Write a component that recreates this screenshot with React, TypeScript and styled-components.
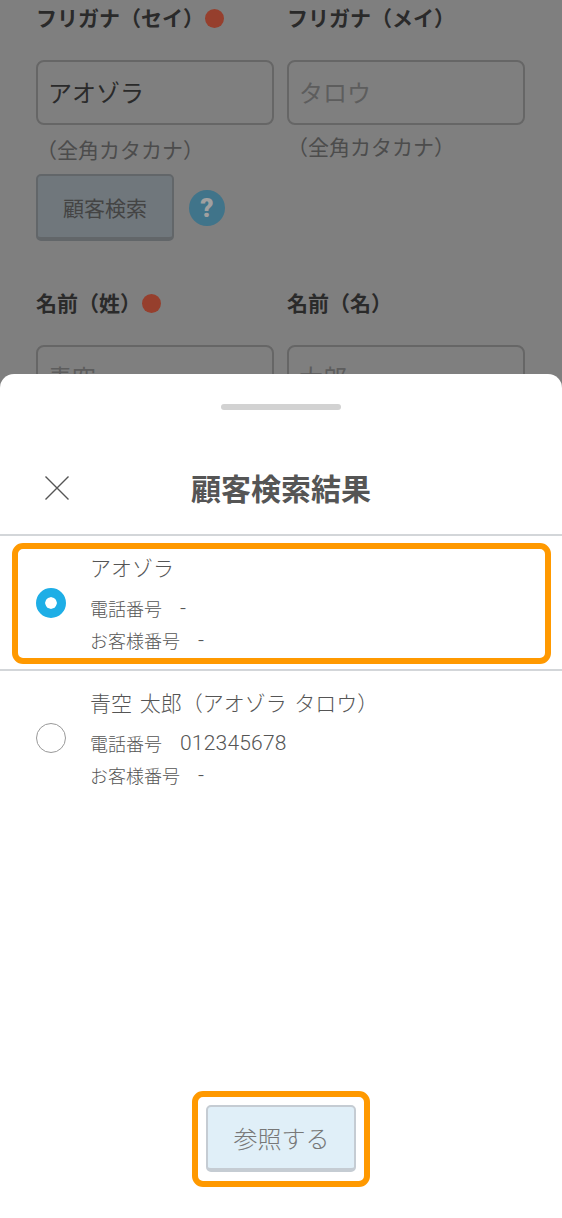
import React from 'react';
import styled, { createGlobalStyle } from 'styled-components';

const GlobalStyle = createGlobalStyle`
  html, body {
    margin: 0;
    padding: 0;
    background: #fff;
    font-family: 'Noto Sans CJK JP', 'Noto Sans', sans-serif;
  }
`;

const Page = styled.div`
  position: relative;
  width: 562px;
  height: 1218px;
  overflow: hidden;
  background: #fff;
`;

const Form = styled.div`
  display: grid;
  grid-template-columns: 238px 238px;
  column-gap: 13px;
  padding: 3px 37px 0 36px;
  align-items: start;
`;

const Field = styled.div`
  display: flex;
  flex-direction: column;
`;

const Label = styled.div`
  box-sizing: border-box;
  display: flex;
  align-items: center;
  gap: 1px;
  height: 30px;
  padding-bottom: 2px;
  margin-bottom: 27px;
  font-size: 21px;
  font-weight: 700;
  color: #555;
`;

const Required = styled.span`
  position: relative;
  top: 1px;
  z-index: 1;
  width: 19px;
  height: 19px;
  border-radius: 50%;
  background: #963f2d;
`;

const Input = styled.div<{ $placeholder?: boolean }>`
  box-sizing: border-box;
  height: 65px;
  padding: 0 10px 2px;
  display: flex;
  align-items: center;
  border: 2px solid #ccc;
  border-radius: 8px;
  background: #fff;
  font-size: 24px;
  color: ${(p) => (p.$placeholder ? '#bbb' : '#555')};
`;

const Hint = styled.div<{ $top: number }>`
  margin-top: ${(p) => p.$top}px;
  font-size: 21px;
  line-height: 30px;
  color: #999;
`;

const SearchRow = styled.div`
  grid-column: 1 / 3;
  display: flex;
  align-items: center;
  gap: 15px;
  margin-top: 10px;
  margin-bottom: 47px;
`;

const SearchButton = styled.div`
  box-sizing: border-box;
  width: 138px;
  height: 67px;
  display: flex;
  align-items: center;
  justify-content: center;
  background: #e0eff8;
  border: 2px solid #c5ccd3;
  border-bottom-width: 4px;
  border-radius: 5px;
  font-size: 21px;
  color: #888;
`;

const Help = styled.div`
  position: relative;
  z-index: 1;
  width: 36px;
  height: 36px;
  border-radius: 50%;
  background: #40748a;
  color: #a0a0a0;
  display: flex;
  align-items: center;
  justify-content: center;
  font-size: 26px;
  font-weight: 900;
  font-family: 'Roboto', sans-serif;
`;

const Overlay = styled.div`
  position: absolute;
  inset: 0;
  background: rgba(0, 0, 0, 0.5);
`;

const Sheet = styled.div`
  position: absolute;
  z-index: 2;
  left: 0;
  right: 0;
  top: 374px;
  bottom: 0;
  background: #fff;
  border-radius: 14px 14px 0 0;
  display: flex;
  flex-direction: column;
`;

const Handle = styled.div`
  width: 120px;
  height: 6px;
  margin: 30px auto 0;
  border-radius: 3px;
  background: #d2d2d2;
`;

const Header = styled.div`
  position: relative;
  height: 126px;
  display: flex;
  align-items: center;
  justify-content: center;
  border-bottom: 2px solid #d3d6d9;
  box-sizing: border-box;
  padding-top: 30px;
  font-size: 30px;
  font-weight: 700;
  color: #555;
`;

const Close = styled.svg`
  position: absolute;
  left: 45px;
  top: 66px;
  width: 24px;
  height: 24px;
`;

const Result = styled.div<{ $divider?: boolean }>`
  box-sizing: border-box;
  height: 135px;
  display: flex;
  align-items: flex-start;
  padding-left: 36px;
  gap: 24px;
  ${(p) => (p.$divider ? 'border-bottom: 2px solid #d3d6d9;' : '')}
`;

const Radio = styled.div<{ $checked?: boolean }>`
  box-sizing: border-box;
  flex: none;
  width: 30px;
  height: 30px;
  margin-top: 52px;
  border-radius: 50%;
  ${(p) =>
    p.$checked
      ? 'background: #1eaee6; border: 9px solid #1eaee6; box-shadow: inset 0 0 0 6px #fff;'
      : 'border: 1.5px solid #999; background: #fff;'}
`;

const ResultText = styled.div`
  display: flex;
  flex-direction: column;
  padding-top: 16px;
  color: #555;
`;

const Name = styled.div`
  font-size: 21px;
  line-height: 30px;
  margin-bottom: 10px;
  font-weight: 300;
  word-spacing: 3px;
`;

const Meta = styled.div`
  display: flex;
  font-size: 18px;
  line-height: 32px;
  font-weight: 300;
`;

const MetaValue = styled.span`
  margin-left: 18px;
  font-family: 'Roboto', sans-serif;
  font-size: 21px;
  font-weight: 300;
  letter-spacing: 0.2px;
`;

const Footer = styled.div`
  margin-top: auto;
  display: flex;
  justify-content: center;
  padding-bottom: 46px;
`;

const SubmitButton = styled.div`
  box-sizing: border-box;
  width: 150px;
  height: 67px;
  padding-left: 1px;
  display: flex;
  align-items: center;
  justify-content: center;
  background: #e0eff8;
  border: 2px solid #c5ccd3;
  border-bottom-width: 4px;
  border-radius: 5px;
  font-size: 24px;
  font-weight: 300;
  color: #777;
`;

const Highlight = styled.div<{ $left: number; $top: number; $w: number; $h: number }>`
  position: absolute;
  z-index: 3;
  box-sizing: border-box;
  left: ${(p) => p.$left}px;
  top: ${(p) => p.$top}px;
  width: ${(p) => p.$w}px;
  height: ${(p) => p.$h}px;
  border: 6px solid #ff9900;
  border-radius: 11px;
  pointer-events: none;
`;

const App: React.FC = () => {
  return (
    <Page>
      <GlobalStyle />
      <Form>
        <Field>
          <Label>
            フリガナ（セイ）<Required />
          </Label>
          <Input>アオゾラ</Input>
          <Hint $top={9}>（全角カタカナ）</Hint>
        </Field>
        <Field>
          <Label>フリガナ（メイ）</Label>
          <Input $placeholder>タロウ</Input>
          <Hint $top={6}>（全角カタカナ）</Hint>
        </Field>
        <SearchRow>
          <SearchButton>顧客検索</SearchButton>
          <Help>?</Help>
        </SearchRow>
        <Field>
          <Label>
            名前（姓）<Required />
          </Label>
          <Input $placeholder>青空</Input>
        </Field>
        <Field>
          <Label>名前（名）</Label>
          <Input $placeholder>太郎</Input>
        </Field>
      </Form>
      <Overlay />
      <Sheet>
        <Handle />
        <Header>
          <Close viewBox="0 0 24 24" fill="none" stroke="#555" strokeWidth="1.4">
            <path d="M0.5 0.5 L23.5 23.5 M23.5 0.5 L0.5 23.5" />
          </Close>
          顧客検索結果
        </Header>
        <Result $divider>
          <Radio $checked />
          <ResultText>
            <Name>アオゾラ</Name>
            <Meta>
              電話番号<MetaValue>-</MetaValue>
            </Meta>
            <Meta>
              お客様番号<MetaValue>-</MetaValue>
            </Meta>
          </ResultText>
        </Result>
        <Result>
          <Radio />
          <ResultText>
            <Name>青空 太郎（アオゾラ タロウ）</Name>
            <Meta>
              電話番号<MetaValue>012345678</MetaValue>
            </Meta>
            <Meta>
              お客様番号<MetaValue>-</MetaValue>
            </Meta>
          </ResultText>
        </Result>
        <Footer>
          <SubmitButton>参照する</SubmitButton>
        </Footer>
      </Sheet>
      <Highlight $left={12} $top={543} $w={539} $h={121} />
      <Highlight $left={192} $top={1091} $w={178} $h={96} />
    </Page>
  );
};

export default App;
